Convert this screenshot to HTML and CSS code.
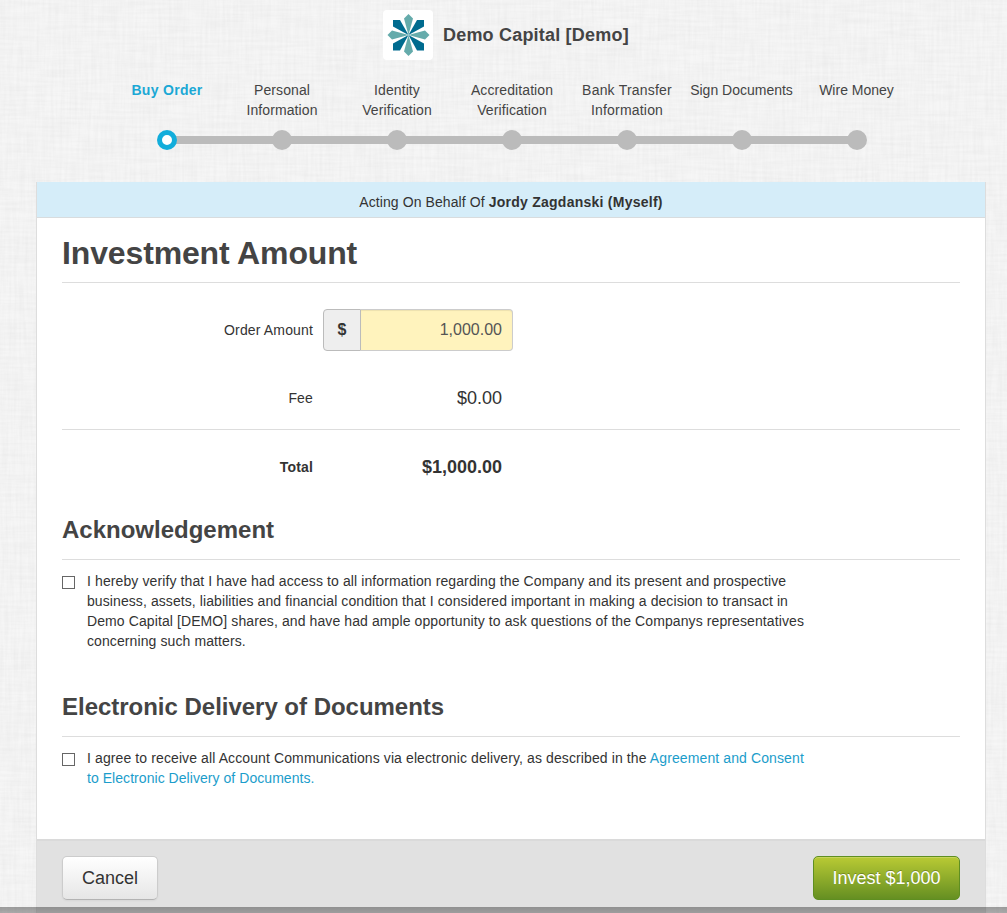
FILE: index.html
```html
<!DOCTYPE html>
<html lang="en">
<head>
<meta charset="utf-8">
<title>Demo Capital - Buy Order</title>
<link rel="stylesheet" href="styles.css">
</head>
<body>
<svg class="linen" aria-hidden="true">
  <filter id="weft" x="0" y="0" width="100%" height="100%"><feTurbulence type="fractalNoise" baseFrequency="0.025 0.35" numOctaves="2" seed="3"/><feColorMatrix values="0 0 0 0 0  0 0 0 0 0  0 0 0 0 0  .04 0 0 0 -.012"/></filter>
  <filter id="warp" x="0" y="0" width="100%" height="100%"><feTurbulence type="fractalNoise" baseFrequency="0.35 0.025" numOctaves="2" seed="8"/><feColorMatrix values="0 0 0 0 0  0 0 0 0 0  0 0 0 0 0  .04 0 0 0 -.012"/></filter>
  <rect width="100%" height="100%" filter="url(#weft)"/>
  <rect width="100%" height="100%" filter="url(#warp)"/>
</svg>
<main class="page">
  <header class="brand">
    <svg class="logo" viewBox="0 0 50 50">
      <g fill="#006b8f">
        <path d="M25.500 25L10 16.500V10H17Z"/>
        <path d="M25.500 25L34 10H41V16.500Z"/>
        <path d="M25.500 25L41 33.500V40.500H34Z"/>
        <path d="M25.500 25L17 40.500H10V33.500Z"/>
      </g>
      <g fill="#65abab">
        <path d="M25.500 25L21 8.500L25.500 4L30 8.500Z"/>
        <path d="M25.500 25L42 20.500L46.500 25L42 29.500Z"/>
        <path d="M25.500 25L30 41.500L25.500 46L21 41.500Z"/>
        <path d="M25.500 25L9 29.500L4.500 25L9 20.500Z"/>
      </g>
    </svg>
    <span class="brand-name">Demo Capital [Demo]</span>
  </header>
  <ol class="steps">
    <li class="step active"><span class="step-label">Buy Order</span><span class="track"><i class="dot"></i></span></li>
    <li class="step"><span class="step-label">Personal<br>Information</span><span class="track"><i class="dot"></i></span></li>
    <li class="step"><span class="step-label">Identity<br>Verification</span><span class="track"><i class="dot"></i></span></li>
    <li class="step"><span class="step-label">Accreditation<br>Verification</span><span class="track"><i class="dot"></i></span></li>
    <li class="step"><span class="step-label wide">Bank Transfer<br>Information</span><span class="track"><i class="dot"></i></span></li>
    <li class="step"><span class="step-label tight">Sign Documents</span><span class="track"><i class="dot"></i></span></li>
    <li class="step"><span class="step-label tight">Wire Money</span><span class="track"><i class="dot"></i></span></li>
  </ol>
  <form class="panel">
    <div class="notice">Acting On Behalf Of <b>Jordy Zagdanski (Myself)</b></div>
    <div class="content">
      <h1>Investment Amount</h1>
      <div class="row order">
        <label class="label">Order Amount</label>
        <div class="amount"><span class="addon">$</span><span class="value">1,000.00</span></div>
      </div>
      <div class="row fee"><span class="label">Fee</span><span class="figure">$0.00</span></div>
      <div class="row total"><span class="label">Total</span><span class="figure">$1,000.00</span></div>
      <h2 class="ack">Acknowledgement</h2>
      <div class="agree"><span class="box"></span><p><span class="l1">I hereby verify that I have had access to all information regarding the Company and its present and prospective</span><br><span class="l2">business, assets, liabilities and financial condition that I considered important in making a decision to transact in</span><br><span class="l3">Demo Capital [DEMO] shares, and have had ample opportunity to ask questions of the Companys representatives</span><br><span class="l4">concerning such matters.</span></p></div>
      <h2 class="delivery">Electronic Delivery of Documents</h2>
      <div class="agree"><span class="box"></span><p><span class="l5">I agree to receive all Account Communications via electronic delivery, as described in the <a>Agreement and Consent</a></span><br><a class="l6">to Electronic Delivery of Documents.</a></p></div>
    </div>
    <footer class="actions">
      <button type="button" class="btn">Cancel</button>
      <button type="button" class="btn primary">Invest $1,000</button>
    </footer>
  </form>
</main>
<div class="edge"></div>
</body>
</html>
```
FILE: styles.css
```css
* { box-sizing: border-box; }
body {
  margin: 0;
  height: 913px;
  overflow: hidden;
  position: relative;
  background: #f6f6f6;
  color: #333;
  font: 14px/20px "Liberation Sans", Arial, sans-serif;
}
.linen { position: absolute; inset: 0; width: 100%; height: 100%; }
.page { position: relative; width: 950px; margin-left: 36px; padding-top: 10px; }
.brand { display: flex; align-items: center; gap: 10px; height: 50px; padding-left: 347px; }
.logo { width: 50px; height: 50px; background: #fff; border-radius: 4px; }
.brand-name { font-size: 18px; font-weight: bold; color: #444; letter-spacing: .2px; }
.steps { display: flex; list-style: none; margin: 20px 0 0 73.5px; padding: 0; width: 805px; }
.step { flex: 1; text-align: center; color: #444; white-space: nowrap; }
.step-label { display: block; height: 50px; letter-spacing: .1px; }
.step-label.wide { letter-spacing: .2px; }
.step-label.tight { letter-spacing: 0; margin-left: -1px; }
.active .step-label { letter-spacing: .3px; }
.track {
  display: flex;
  justify-content: center;
  height: 20px;
  background: linear-gradient(#bbb, #bbb) 0 6px / 100% 8px no-repeat;
}
.step:first-child .track { background-position: 57.5px 6px; }
.step:last-child .track { background-size: 57.5px 8px; }
.dot { width: 20px; height: 20px; border-radius: 50%; background: #bbb; }
.active { color: #1ba8d5; font-weight: bold; }
.active .dot { background: #fff; border: 5px solid #12addb; }
.panel { margin-top: 32px; height: 731px; border: 1px solid #ddd; border-top: 0; background: #fff; }
.notice { height: 36px; padding-top: 10px; border-bottom: 1px solid #d8dcde; background: #d5edf9; text-align: center; letter-spacing: .09px; }
.notice b { letter-spacing: .25px; }
.content { height: 621px; padding: 15px 25px 0; }
h1, h2 { margin: 0; color: #444; border-bottom: 1px solid #ddd; white-space: nowrap; }
h1 { height: 50px; font-size: 32px; line-height: 40px; letter-spacing: -.14px; }
h2 { height: 50px; font-size: 24px; line-height: 40px; }
.row { display: flex; align-items: center; }
.label { width: 251px; text-align: right; letter-spacing: .15px; }
.order { height: 42px; margin-top: 26px; }
.amount { display: flex; width: 190px; height: 42px; margin-left: 10px; line-height: 40px; }
.addon { width: 38px; border: 1px solid #bbb; border-radius: 4px 0 0 4px; background: #eee; text-align: center; font-size: 16px; font-weight: bold; }
.value { flex: 1; border: 1px solid #ccc; border-left: 0; border-radius: 0 4px 4px 0; background: #fff3bd; padding-right: 10px; text-align: right; font-size: 16px; color: #555; box-shadow: inset 0 1px 1px rgba(0,0,0,.075); }
.figure { width: 189px; text-align: right; font-size: 18px; }
.fee { height: 63px; margin-top: 15px; }
.total { height: 74px; padding-top: 1px; border-top: 1px solid #ddd; font-weight: bold; }
.ack { margin-top: 7px; }
.delivery { margin-top: 36px; letter-spacing: -.02px; }
.agree { display: flex; margin-top: 11px; }
.agree p { margin: 0; white-space: nowrap; letter-spacing: .1px; }
.l1, .l5 { letter-spacing: .108px; }
.l2 { letter-spacing: .085px; }
.l3 { letter-spacing: .097px; }
.l6 { letter-spacing: .05px; }
.box { width: 13px; height: 13px; margin: 5px 12px 0 0; border: 1px solid #666; background: #fff; }
a { color: #1b9dcb; }
.actions { display: flex; justify-content: space-between; height: 74px; padding: 15px 25px 0; background: #e1e1e1; border-top: 2px solid #dadada; }
.btn { width: 96px; height: 44px; padding: 0; border: 1px solid #ccc; border-bottom-color: #b3b3b3; border-radius: 5px; background: linear-gradient(#fff, #e6e6e6); box-shadow: inset 0 1px 0 #fff, 0 1px 2px rgba(0,0,0,.05); color: #333; font: 18px/20px "Liberation Sans", Arial, sans-serif; }
.primary { width: 147px; color: #fff; border-color: #5f8f21; background: linear-gradient(#b9ca34, #658f22); box-shadow: inset 0 1px 0 rgba(255,255,255,.2); text-shadow: 0 -1px 0 rgba(0,0,0,.25); }
.edge { position: absolute; left: 0; right: 0; bottom: 0; height: 6px; background: linear-gradient(rgba(0,0,0,.36), rgba(0,0,0,.3)); }
```
